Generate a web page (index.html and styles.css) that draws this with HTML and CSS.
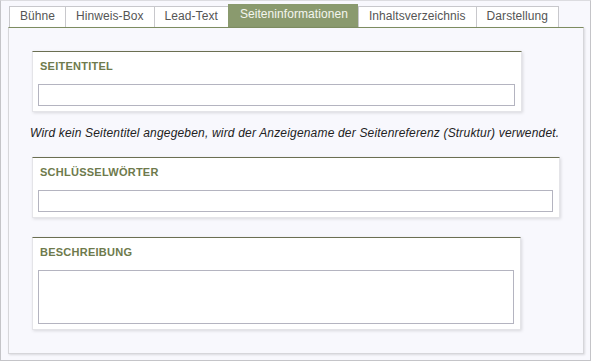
FILE: index.html
```html
<!DOCTYPE html>
<html lang="de">
<head>
    <meta charset="UTF-8">
    <meta name="viewport" content="width=device-width, initial-scale=1.0">
    <title>Seiteninformationen</title>
    <link rel="stylesheet" href="styles.css">
</head>
<body>
    <div id="editor">
        <ul class="tabs">
            <li class="tab">Bühne</li>
            <li class="tab">Hinweis-Box</li>
            <li class="tab">Lead-Text</li>
            <li class="tab active">Seiteninformationen</li>
            <li class="tab">Inhaltsverzeichnis</li>
            <li class="tab last">Darstellung</li>
        </ul>
        <div class="panel">
            <div class="field field-title">
                <label class="field-label" for="seitentitel">SEITENTITEL</label>
                <input class="field-input" id="seitentitel" type="text">
            </div>
            <p class="hint">Wird kein Seitentitel angegeben, wird der Anzeigename der Seitenreferenz (Struktur) verwendet.</p>
            <div class="field field-keywords">
                <label class="field-label" for="keywords">SCHLÜSSELWÖRTER</label>
                <input class="field-input" id="keywords" type="text">
            </div>
            <div class="field field-desc">
                <label class="field-label" for="beschreibung">BESCHREIBUNG</label>
                <textarea class="field-input field-area" id="beschreibung"></textarea>
            </div>
        </div>
    </div>
</body>
</html>
```

FILE: styles.css
```css
* {
    box-sizing: border-box;
}

body {
    margin: 0;
    padding: 0;
    font-family: "Liberation Sans", Arial, sans-serif;
    background-color: #ffffff;
}

#editor {
    width: 591px;
    height: 361px;
    border: 1px solid #c4c4c8;
    border-top-color: #dcdce0;
    background-color: #f8f8fd; /* Fondo lila muy claro */
    padding: 3px 6px 6px 7px;
    display: flex;
    flex-direction: column;
}

.tabs {
    list-style: none;
    margin: 0;
    padding: 0 0 0 1px;
    display: flex;
    align-items: flex-end;
}

.tab {
    font-size: 12px;
    line-height: 19px;
    letter-spacing: 0.07px;
    padding: 0 10px 1px 10px;
    color: #555555;
    background-color: #ffffff;
    border-top: 1px solid #c8c8cc;
    border-left: 1px solid #c8c8cc;
}

.tab.last {
    border-right: 1px solid #c8c8cc;
}

.tab.active {
    background-color: #8a9a6e; /* Verde oliva */
    border-color: #8a9a6e;
    color: #f4f6ee;
    padding: 0 10px 3px 11px;
}

.tab.active + .tab {
    border-left-color: #c8c8cc;
}

.panel {
    flex: 1;
    border: 1px solid #d6d6da;
    border-top-color: #7d8c60;
    background-color: #f8f8fd;
    box-shadow: 1px 1px 2px rgba(0, 0, 0, 0.12);
    padding: 23px 0 0 23px;
}

.field {
    background-color: #ffffff;
    border: 1px solid #e4e4e8;
    border-top-color: #6b6f52;
    box-shadow: 1px 1px 3px rgba(0, 0, 0, 0.13);
    padding: 8px 6px 5px 5px;
}

.field-title {
    width: 490px;
}

.field-keywords {
    width: 528px;
    margin-top: 16px;
}

.field-desc {
    width: 489px;
    margin-top: 19px;
}

.field-label {
    display: block;
    font-size: 11px;
    font-weight: bold;
    line-height: 13px;
    letter-spacing: 0.25px;
    color: #6e7a4c; /* Oliva oscuro */
    padding-left: 2px;
    margin-bottom: 11px;
}

.field-input {
    display: block;
    width: 100%;
    height: 22px;
    margin: 0;
    border: 1px solid #b4b4c0;
    background-color: #ffffff;
    font-family: inherit;
    font-size: 12px;
}

.field-area {
    height: 54px;
    resize: none;
}

.hint {
    margin: 14px 0 0 -2px;
    font-size: 12px;
    line-height: 15px;
    letter-spacing: 0.18px;
    font-style: italic;
    color: #222222;
}
```
